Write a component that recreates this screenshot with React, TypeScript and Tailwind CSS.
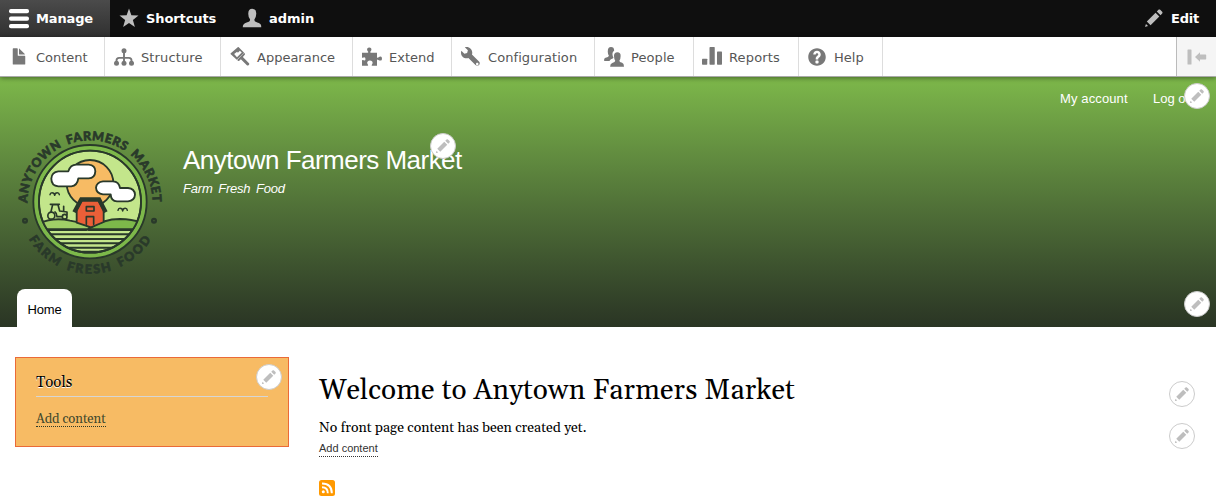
import type { ReactNode } from "react";

function Icon({ children, className = "size-5 text-[#787878]" }: { children: ReactNode; className?: string }) {
  return (
    <svg viewBox="0 0 16 16" fill="currentColor" className={`shrink-0 ${className}`}>
      {children}
    </svg>
  );
}

function PencilPaths() {
  return (
    <>
      <path d="M14.545 3.042l-1.586-1.585c-.389-.389-1.025-.389-1.414 0l-1.293 1.293 3 3 1.293-1.293c.389-.389.389-1.026 0-1.415z" />
      <rect x="5.129" y="3.8" width="4.243" height="9.899" transform="matrix(-.707 -.707 .707 -.707 6.189 20.064)" />
      <path d="M.908 14.775c-.087.262.055.397.316.312l2.001-.667-1.65-1.646-.667 2.001z" />
    </>
  );
}

function ContextualPencil({ className }: { className: string }) {
  return (
    <button
      aria-label="Open configuration options"
      className={`absolute z-10 flex size-[26px] items-center justify-center rounded-full border border-[#ccc] bg-white ${className}`}
    >
      <Icon className="size-4 text-[#bebebe]">
        <PencilPaths />
      </Icon>
    </button>
  );
}

const trayItems: { label: string; box: string; icon: ReactNode }[] = [
  {
    label: "Content",
    box: "w-[105px] pl-[9px]",
    icon: (
      <path d="M12.502 7h-5c-.276 0-.502-.225-.502-.5v-5c0-.275-.225-.5-.5-.5h-3c-.275 0-.5.225-.5.5v12.029c0 .275.225.5.5.5h9.002c.275 0 .5-.225.5-.5v-6.029c0-.275-.225-.5-.5-.5zM8.502 6h4c.275 0 .34-.159.146-.354l-4.293-4.292c-.195-.195-.353-.129-.353.146v4c0 .275.225.5.5.5z" />
    ),
  },
  {
    label: "Structure",
    box: "w-[116px] pl-[9px] tracking-[0.12px]",
    icon: (
      <>
        <circle cx="8" cy="3" r="2" />
        <circle cx="2" cy="12.9" r="2" />
        <circle cx="8" cy="12.9" r="2" />
        <circle cx="14" cy="12.9" r="2" />
        <path d="M8 3v10M2 12v-1.200q0-2.100 2.100-2.100h7.800q2.100 0 2.100 2.100V12" fill="none" stroke="currentColor" strokeWidth="1.500" />
      </>
    ),
  },
  {
    label: "Appearance",
    box: "w-[132px] pl-[9px]",
    icon: (
      <>
        <path
          fillRule="evenodd"
          d="M6.200.1q.4-.3.800.1l4.300 4.300-5.900 5.700L.600 5.800q-.4-.4 0-.8zM3.300 5.600l2.300 2.500L9.400 4.400 7.900 2.900 6.300 4.500l-.6-.8z"
        />
        <path d="M11.400 4.600l.5.700q.3.500-.1.900l-1.500 1.700 4.900 5q.6.700 0 1.300l-.4.400q-.7.600-1.300-.1L8.700 9.700l-1.300 1.200q-.5.400-1 0l-.7-.6z" />
      </>
    ),
  },
  {
    label: "Extend",
    box: "w-[99px] pl-[9px]",
    icon: (
      <path d="M0 4.500h4.400q.8 0 .6-.8-.6-.7-.9-1.400Q3.800.3 5.800.3t1.700 2q-.3.700-.9 1.400-.2.800.6.800H12v3.600q.1.600.7.400 3.300-2.100 3.300.800 0 2.700-3.300.8-.6-.2-.7.400V15H8.300q-.8 0-.5-.7 1.300-1.600.4-2.700-1.100-1.200-2.900-.7-1.900.9-.7 2.800.8 1.300-.2 1.300H0v-4.300q.1-.5.700-.3 1.900 1 2.100-.7.100-1.800-1.600-1.400-.9.600-1.200.1z" />
    ),
  },
  {
    label: "Configuration",
    box: "w-[143px] pl-[9px] tracking-[0.08px]",
    icon: (
      <path d="M14.416 11.586l-.01-.008v-.001l-5.656-5.656c.15-.449.252-.921.252-1.421 0-2.485-2.016-4.500-4.502-4.500-.505 0-.981.102-1.434.255l2.431 2.431-.588 2.196-2.196.588-2.445-2.445c-.162.464-.268.956-.268 1.475 0 2.486 2.014 4.500 4.500 4.500.5 0 .972-.102 1.421-.251l5.667 5.665c.781.781 2.047.781 2.828 0s.781-2.047 0-2.828zm-1.414 2.914c-.553 0-1-.447-1-1s.447-1 1-1 1 .447 1 1-.447 1-1 1z" />
    ),
  },
  {
    label: "People",
    box: "w-[99px] pl-[9px] tracking-[0.08px]",
    icon: (
      <>
        <path d="M5.600 0q2.600 0 2.500 2.900Q6.300 4 6.900 6.700q.1.900.7 1.700-.2.800-2 1.400-.8.500-1.200 1.400H.2q-.5-2 1-2.600 2.600-.6 2.700-1.700-.9-1.100-.9-3.400Q3 0 5.600 0z" />
        <path d="M10.700 4.200q2.700 0 2.600 3 0 2.200-1 3.700-.1 1.200 2.200 1.700 1.500.5 1.500 3.200H4.900q0-2.500 1.700-3.100 2.400-.6 2.400-1.700-1-1.600-1-3.800 0-3 2.700-3z" />
      </>
    ),
  },
  {
    label: "Reports",
    box: "w-[105px] pl-2 tracking-[0.15px]",
    icon: (
      <>
        <rect x="0" y="9.300" width="4.200" height="4.800" rx=".5" />
        <rect x="6" y="0" width="4.200" height="14.100" rx=".5" />
        <rect x="12" y="3.600" width="4" height="10.500" rx=".5" />
      </>
    ),
  },
  {
    label: "Help",
    box: "w-[84px] pl-2",
    icon: (
      <path d="M8.002 1c-3.868 0-7.002 3.134-7.002 7s3.134 7 7.002 7c3.865 0 7-3.134 7-7s-3.135-7-7-7zm3 5c0 .551-.16 1.085-.477 1.586l-.158.22c-.07.093-.189.241-.361.393-.168.148-.35.299-.545.447l-.203.189-.141.129-.096.17-.021.235v.63h-2.001v-.704c.026-.396.078-.73.204-.999.125-.269.271-.498.439-.688l.225-.21-.01-.015.176-.14.137-.128c.186-.139.357-.277.516-.417l.148-.18c.098-.152.168-.323.168-.518 0-.552-.447-1-1-1s-1.002.448-1.002 1h-2c0-1.657 1.343-3 3.002-3 1.656 0 3 1.343 3 3zm-1.750 6.619c0 .344-.281.625-.625.625h-1.250c-.345 0-.626-.281-.626-.625v-1.238c0-.344.281-.625.626-.625h1.250c.344 0 .625.281.625.625v1.238z" />
    ),
  },
];

function Logo() {
  return (
    <svg viewBox="0 0 480 480" className="size-[160px] shrink-0" stroke="#29392a" strokeWidth="5.500" strokeLinejoin="round" strokeLinecap="round">
      <defs>
        <path id="arc-top" d="M52 249A188 188 0 0 1 428 249" />
        <path id="arc-bottom" d="M26 247A214 214 0 0 0 454 247" />
        <clipPath id="scene">
          <circle cx="240" cy="245" r="153" />
        </clipPath>
      </defs>
      <g fill="#29392a" strokeWidth="2" fontFamily="Lato, sans-serif" fontWeight="900" fontSize="37" className="[word-spacing:7px]">
        <text>
          <textPath href="#arc-top" textLength="588">ANYTOWN FARMERS MARKET</textPath>
        </text>
        <text>
          <textPath href="#arc-bottom" startOffset="115" textLength="440">FARM FRESH FOOD</textPath>
        </text>
      </g>
      <circle cx="45" cy="302" r="5.500" fill="none" strokeWidth="7" />
      <circle cx="432" cy="302" r="5.500" fill="none" strokeWidth="7" />
      <circle cx="240" cy="245" r="170" fill="#7db84a" />
      <circle cx="240" cy="245" r="153" fill="#c3e68b" />
      <g clipPath="url(#scene)">
        <circle cx="240" cy="190" r="70" fill="#f7bb64" />
        <path d="M80 312Q130 290 180 302Q220 308 244 325L230 330H80z" fill="#a0cf67" />
        <path d="M236 326Q280 297 330 297Q375 298 405 312V330H236z" fill="#7db84a" />
        <path d="M80 328H400" strokeWidth="6" strokeLinecap="butt" />
        <path d="M80 343H400M80 357H400M80 370H400M80 383H400" strokeWidth="6" />
        <path d="M80 395H400" strokeWidth="5" />
      </g>
      <circle cx="240" cy="245" r="153" fill="none" />
      <path d="M145 154H175Q181 134 199 134H236Q256 136 256 154Q255 174 236 175H205Q202 197 184 199H145Q124 197 124 176Q125 156 145 154z" fill="#fff" />
      <path d="M279 184H309Q327 185 330 204H354Q374 206 375 224Q374 242 354 244H321Q303 243 302 223H279Q259 221 258 203Q260 186 279 184z" fill="#fff" />
      <path d="M120 224q1-6 6-6 7 0 8 8 1-8 8-8 5 0 6 6M324 271q1-6 6-6 7 0 8 8 1-8 8-8 5 0 6 6" fill="none" strokeWidth="4.500" />
      <path d="M200 270L215 242H266L281 270V306L243 322L200 308z" fill="#ea5f38" />
      <path d="M193 277L214 238H267L287 277" fill="none" strokeWidth="13" strokeLinejoin="miter" strokeLinecap="butt" />
      <path d="M229 260H252V273H229zM229 313V290H251V313" fill="none" strokeWidth="5" />
      <g fill="none" strokeWidth="5">
        <circle cx="124" cy="287" r="10.500" />
        <circle cx="164" cy="290" r="7" />
        <path d="M123 275L128 254H144L149 273L171 276V284M135 276Q141 280 141 290H154M161 273V259M121 253H148" />
      </g>
    </svg>
  );
}

export default function App() {
  return (
    <div className="h-[496px] w-[1216px] overflow-hidden bg-white font-['Liberation_Sans',sans-serif]">
      <nav className="flex h-[37px] items-center bg-[#0f0f0f] font-['DejaVu_Sans',sans-serif] text-[13px] font-bold text-white">
        <a className="flex h-full w-[110px] items-center gap-[7px] bg-linear-to-b from-[#4b4b4b] to-[#303030] pl-[9px] tracking-[-0.15px]">
          <Icon className="size-5 text-white">
            <rect y="0" width="16" height="3.300" rx="1.500" />
            <rect y="6" width="16" height="3.300" rx="1.500" />
            <rect y="12" width="16" height="3.300" rx="1.500" />
          </Icon>
          <span className="pt-px">Manage</span>
        </a>
        <a className="flex w-[123px] items-center gap-[7px] pb-px pl-[9px] tracking-[-0.1px]">
          <Icon className="size-5 text-[#bebebe]">
            <path d="M8 .300 9.900 5.800 15.600 6 11.100 9.500 12.700 15.200 8 11.900 3.300 15.200 4.900 9.500.4 6 6.100 5.800z" />
          </Icon>
          <span className="pt-0.5">Shortcuts</span>
        </a>
        <a className="flex items-center gap-[7px] pb-px pl-[9px]">
          <Icon className="size-5 text-[#bebebe]">
            <path d="M8.200.5Q11.500.6 11.400 4.500q-.1 2.800-1.400 4.500-.5 1.800 2.200 2.500 2.800.600 3.100 2.500l.1 1.300H.6q0-2.800 3.100-3.700 3.100-.700 2.700-2.600Q5 7.300 5 4.500 5 .6 8.200.5z" />
          </Icon>
          <span className="pt-0.5">admin</span>
        </a>
        <a className="ml-auto flex w-[72px] items-center gap-[7px] pb-px tracking-[-0.2px]">
          <Icon className="size-5 text-[#bebebe]">
            <PencilPaths />
          </Icon>
          <span className="pt-0.5">Edit</span>
        </a>
      </nav>

      <nav className="relative z-20 flex h-10 border-b border-[#aaa] bg-white font-['DejaVu_Sans',sans-serif] text-[13px] text-[#565656] shadow-[0_1px_5px_rgba(0,0,0,0.45)]">
        {trayItems.map((item) => (
          <a key={item.label} className={`flex items-center gap-[7px] border-r border-[#ddd] pt-px ${item.box}`}>
            <Icon>{item.icon}</Icon>
            <span className="pt-0.5">{item.label}</span>
          </a>
        ))}
        <button aria-label="Horizontal orientation" className="ml-auto flex w-10 items-center justify-center border-l border-[#bbb] bg-[#f5f5f5]">
          <svg viewBox="0 0 20 16" className="h-4 w-5 fill-[#bebebe]">
            <rect x=".500" y=".500" width="4" height="15" rx=".500" />
            <path d="M8 8l5-4.800v2.300h5.500q.7 0 .7.700v3.600q0 .7-.7.700H13v2.300z" />
          </svg>
        </button>
      </nav>

      <header className="relative flex h-[250px] flex-col bg-linear-to-b from-[#7db84a] to-[#2a3524] text-white">
        <div className="flex h-[43px] justify-end gap-[25px] pr-[18px] pt-[14px] text-[13px] leading-4">
          <a className="w-[68px] whitespace-nowrap tracking-[0.12px]">My account</a>
          <a className="w-[45px] whitespace-nowrap">Log out</a>
        </div>
        <ContextualPencil className="right-[6px] top-[6px]" />
        <div className="flex h-[169px] pl-[10px]">
          <Logo />
          <div className="relative ml-[13px] h-fit w-[280px] pt-[24px]">
            <h1 className="whitespace-nowrap text-[26px] leading-8 tracking-[-0.53px]">Anytown Farmers Market</h1>
            <p className="mt-[5px] text-[13px] italic leading-4 tracking-[-0.2px] [word-spacing:2.200px]">Farm Fresh Food</p>
            <ContextualPencil className="right-[7px] top-[13px]" />
          </div>
        </div>
        <div className="pl-[17px]">
          <a className="flex h-[38px] w-[55px] items-center justify-center rounded-t-lg bg-white pt-1 text-[13px] tracking-[-0.15px] text-black">Home</a>
        </div>
        <ContextualPencil className="bottom-[10px] right-[6px]" />
      </header>

      <main className="flex pl-[15px] pt-[30px] font-[Gelasio,Georgia,'Liberation_Serif',serif]">
        <aside className="relative h-[90px] w-[274px] border border-[#ea6a38] bg-[#f7bb64] px-5 pt-[15px]">
          <h2 className="h-6 border-b border-[#d6d6d6] text-[15px] leading-5 text-black [text-shadow:0_1px_0_#fff]">Tools</h2>
          <a className="mt-[14px] block h-4 w-fit border-b border-dotted border-[#29392a] text-[13px] leading-[17px] tracking-[-0.07px] text-[#41482c]">Add content</a>
          <ContextualPencil className="right-[6px] top-[6px]" />
        </aside>
        <section className="relative ml-[30px] flex-1 pt-[16px] text-black">
          <h1 className="whitespace-nowrap text-[28px] leading-9 tracking-[0.13px]">Welcome to Anytown Farmers Market</h1>
          <p className="mt-[9px] text-[14px] leading-5">No front page content has been created yet.</p>
          <a className="mt-[2px] block w-fit border-b border-dotted border-[#333] font-['Liberation_Sans',sans-serif] text-[11px] leading-4 text-[#333]">Add content</a>
          <svg viewBox="0 0 16 16" className="mt-[23px] size-4">
            <rect width="16" height="16" rx="2.500" fill="#ff9900" />
            <circle cx="4.300" cy="11.800" r="1.500" fill="#fff" />
            <path d="M3 7.200q5.800 0 5.800 6M3 3.500q9.800 0 9.800 9.700" fill="none" stroke="#fff" strokeWidth="1.900" />
          </svg>
          <ContextualPencil className="right-[21px] top-[24px]" />
          <ContextualPencil className="right-[21px] top-[66px]" />
        </section>
      </main>
    </div>
  );
}
